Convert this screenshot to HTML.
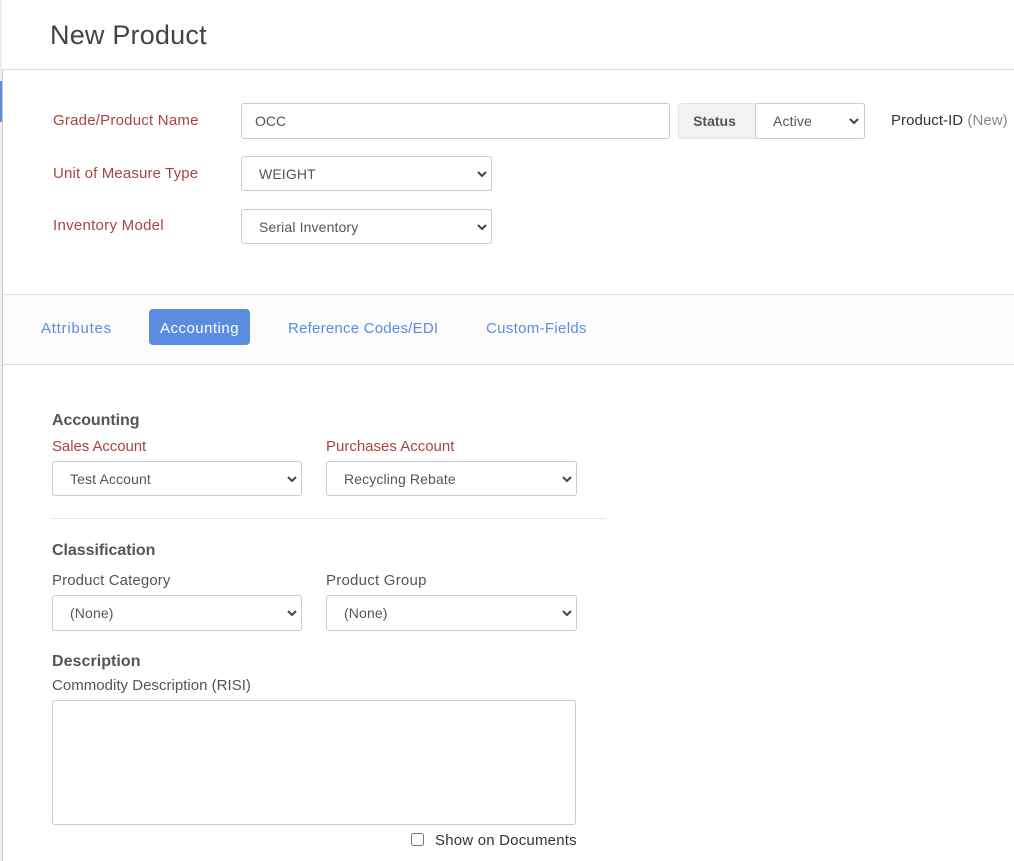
<!DOCTYPE html>
<html lang="en">
<head>
<meta charset="utf-8">
<title>New Product</title>
<style>
html,body{margin:0;padding:0;background:#fff;}
body{position:relative;width:1014px;height:861px;overflow:hidden;font-family:"Liberation Sans",Arial,sans-serif;color:#555;}
.t{position:absolute;white-space:nowrap;font-size:15px;line-height:20px;letter-spacing:.2px;}
.r{color:#a94442;}
.d{color:#555;}
.b{font-weight:bold;font-size:16px;letter-spacing:-.05px;color:#555;}
.l{color:#5b8ce0;}
.box{position:absolute;box-sizing:border-box;background:#fff;border:1px solid #ccc;border-radius:3px;}
select.box,input.box{font-family:"Liberation Sans",Arial,sans-serif;font-size:14px;color:#555;margin:0;outline:0;}
select.box{padding:0 0 0 17px;appearance:none;-webkit-appearance:none;letter-spacing:.13px;}
input.box{padding:0 13px;}
.line{position:absolute;background:#ddd;height:1px;}
.c{position:absolute;width:10px;height:6px;overflow:visible;pointer-events:none;}
</style>
</head>
<body>
<div style="position:absolute;left:0;top:0;width:2px;height:70px;background:#eee"></div>
<div style="position:absolute;left:2px;top:69px;width:1012px;height:1px;background:#ddd"></div>
<div style="position:absolute;left:2px;top:70px;width:1px;height:791px;background:#ccc"></div>
<div style="position:absolute;left:0;top:70px;width:2px;height:791px;background:#f0f0f0"></div>
<div style="position:absolute;left:0;top:81px;width:2px;height:41px;background:#5b8ce0"></div>

<div class="t" style="left:50px;top:17px;font-size:27px;line-height:36px;letter-spacing:.2px;color:#444">New Product</div>

<div class="t r" style="left:53px;top:111px;letter-spacing:.22px">Grade/Product Name</div>
<input class="box" style="left:241px;top:103px;width:429px;height:36px" value="OCC">
<div class="box" style="left:678px;top:103px;width:78px;height:36px;background:#f2f2f2;border-color:#e4e4e4;border-radius:3px 0 0 3px;padding-right:5px;text-align:center;font-weight:bold;font-size:14px;line-height:34px;color:#555">Status</div>
<select class="box" style="left:755px;top:103px;width:110px;height:36px"><option>Active</option></select>
<svg class="c" viewBox="0 0 10 6" style="left:849px;top:118px"><path d="M1 1l4 4 4-4" fill="none" stroke="#444" stroke-width="2"/></svg>
<div class="t" style="left:891px;top:111px;color:#333;letter-spacing:.05px">Product-ID <span style="color:#888">(New)</span></div>

<div class="t r" style="left:53px;top:164px;letter-spacing:.15px">Unit of Measure Type</div>
<select class="box" style="left:241px;top:156px;width:251px;height:35px"><option>WEIGHT</option></select>
<svg class="c" viewBox="0 0 10 6" style="left:477px;top:171px"><path d="M1 1l4 4 4-4" fill="none" stroke="#444" stroke-width="2"/></svg>
<div class="t r" style="left:53px;top:216px;letter-spacing:.28px">Inventory Model</div>
<select class="box" style="left:241px;top:209px;width:251px;height:35px"><option>Serial Inventory</option></select>
<svg class="c" viewBox="0 0 10 6" style="left:477px;top:224px"><path d="M1 1l4 4 4-4" fill="none" stroke="#444" stroke-width="2"/></svg>

<div style="position:absolute;left:3px;top:294px;width:1011px;height:71px;box-sizing:border-box;background:#fcfcfc;border-top:1px solid #ddd;border-bottom:1px solid #ddd"></div>
<div class="t l" style="left:41px;top:319px;letter-spacing:.75px">Attributes</div>
<div style="position:absolute;left:149px;top:309px;width:101px;height:36px;border-radius:4px;background:#5b8ce0"></div>
<div class="t" style="left:160px;top:319px;color:#fff;letter-spacing:.48px">Accounting</div>
<div class="t l" style="left:288px;top:319px;letter-spacing:.23px">Reference Codes/EDI</div>
<div class="t l" style="left:486px;top:319px;letter-spacing:.32px">Custom-Fields</div>

<div class="t b" style="left:52px;top:411px">Accounting</div>
<div class="t r" style="left:52px;top:437px;letter-spacing:-.07px">Sales Account</div>
<div class="t r" style="left:326px;top:437px;letter-spacing:0">Purchases Account</div>
<select class="box" style="left:52px;top:461px;width:250px;height:35px"><option>Test Account</option></select>
<svg class="c" viewBox="0 0 10 6" style="left:287px;top:476px"><path d="M1 1l4 4 4-4" fill="none" stroke="#444" stroke-width="2"/></svg>
<select class="box" style="left:326px;top:461px;width:251px;height:35px"><option>Recycling Rebate</option></select>
<svg class="c" viewBox="0 0 10 6" style="left:562px;top:476px"><path d="M1 1l4 4 4-4" fill="none" stroke="#444" stroke-width="2"/></svg>
<div class="line" style="left:52px;top:518px;width:554px;background:#e5e5e5"></div>

<div class="t b" style="left:52px;top:541px">Classification</div>
<div class="t d" style="left:52px;top:571px;letter-spacing:.11px">Product Category</div>
<div class="t d" style="left:326px;top:571px;letter-spacing:.24px">Product Group</div>
<select class="box" style="left:52px;top:595px;width:250px;height:36px"><option>(None)</option></select>
<svg class="c" viewBox="0 0 10 6" style="left:287px;top:610px"><path d="M1 1l4 4 4-4" fill="none" stroke="#444" stroke-width="2"/></svg>
<select class="box" style="left:326px;top:595px;width:251px;height:36px"><option>(None)</option></select>
<svg class="c" viewBox="0 0 10 6" style="left:562px;top:610px"><path d="M1 1l4 4 4-4" fill="none" stroke="#444" stroke-width="2"/></svg>

<div class="t b" style="left:52px;top:652px;letter-spacing:.05px">Description</div>
<div class="t d" style="left:52px;top:676px;letter-spacing:.02px">Commodity Description (RISI)</div>
<div class="box" style="left:52px;top:700px;width:524px;height:125px"></div>
<input type="checkbox" style="position:absolute;left:411px;top:833px;width:13px;height:13px;margin:0">
<div class="t" style="left:435px;top:831px;color:#333;letter-spacing:.2px">Show on Documents</div>
</body>
</html>
